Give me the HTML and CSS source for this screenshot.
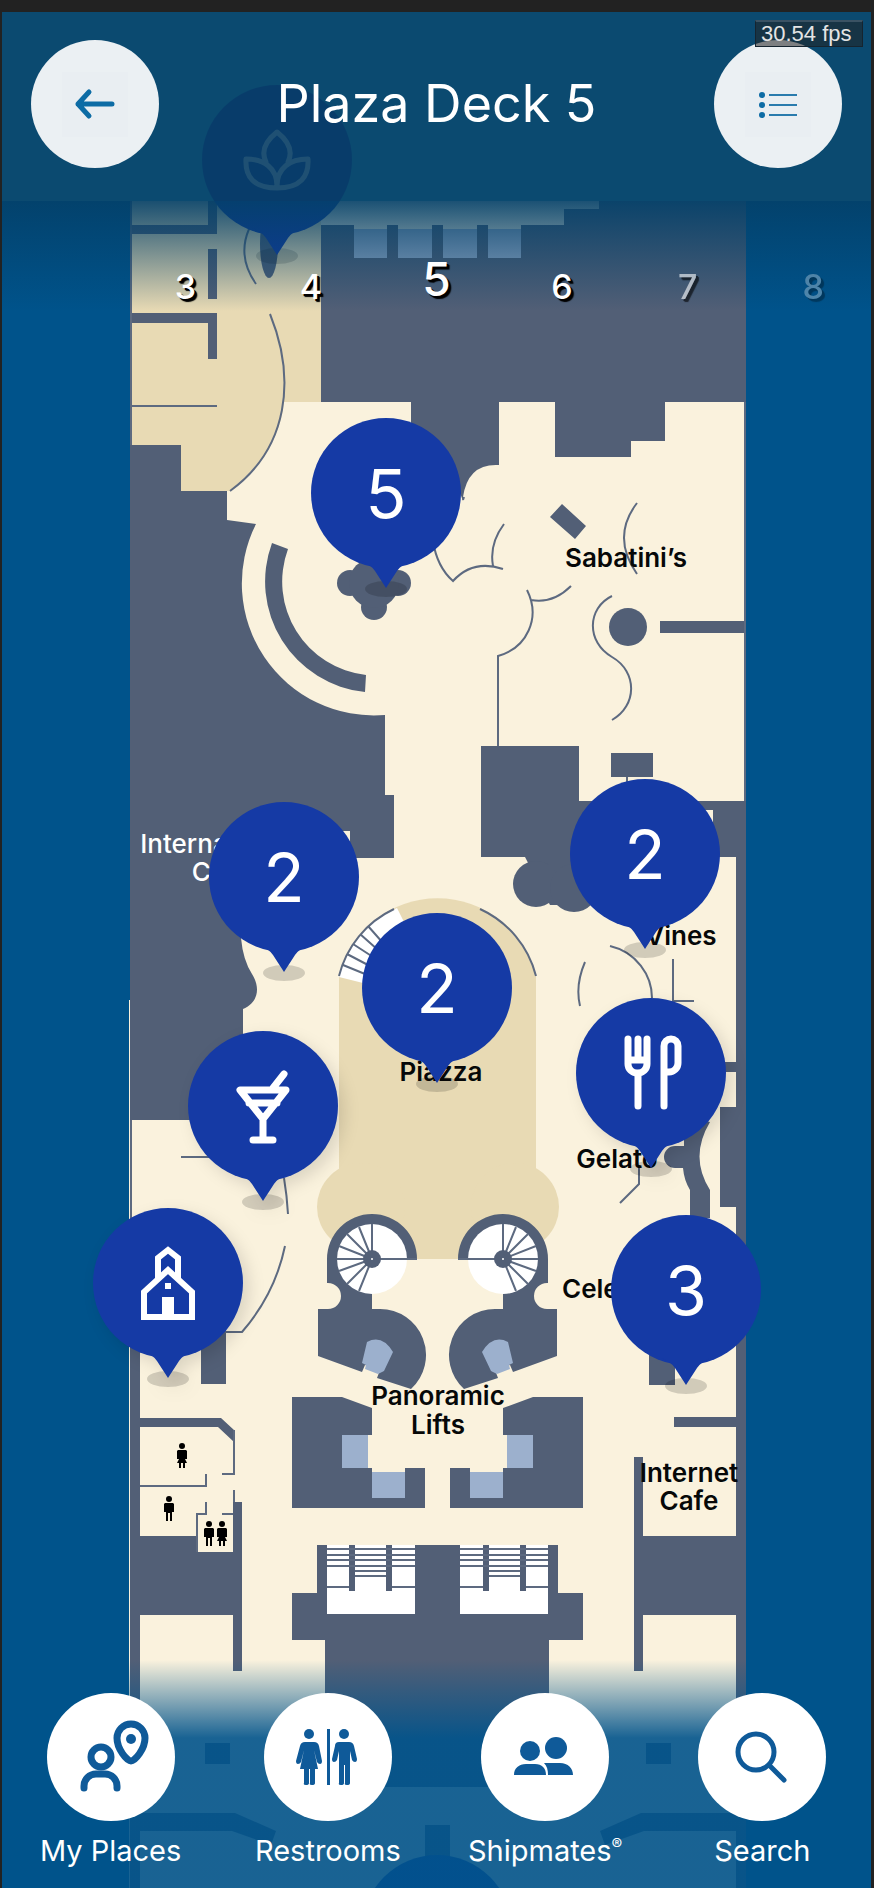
FILE: index.html
```html
<!DOCTYPE html>
<html lang="en">
<head>
<meta charset="utf-8">
<meta name="viewport" content="width=device-width, initial-scale=1">
<title>Plaza Deck 5</title>
<link rel="stylesheet" href="styles.css">
</head>
<body>
<div class="app">
  <main class="map">
    <svg class="plan" viewBox="2 12 869 1876" role="img" aria-label="Deck 5 floor plan">
      <defs>
        <g id="person">
          <circle cx="6" cy="3" r="3"/>
          <path d="M2 7h8l1 1v8H9v9H7v-8H5v8H3v-9H1V8z"/>
        </g>
        <g id="woman">
          <circle cx="6" cy="3" r="3"/>
          <path d="M2 7h8l1 1v8H9l2 4H9v5H7v-5H5v5H3v-5H1l2-4H1V8z"/>
        </g>
        <!-- port half of the atrium: spiral stair, curved lift and lift lobby -->
        <g id="atrium">
          <path class="slate" d="M327 1259a45 45 0 0 1 90 0h-45v50h8a46 46 0 0 1 31 80l-34-11 3-8-15-5-3 7-44-16v-47h10a13 13 0 0 0 0-26h-1z"/>
          <circle class="white" cx="372" cy="1259" r="35"/>
          <path class="line" d="M372 1259v-35M372 1259l-13-32M372 1259l-25-25M372 1259l-33-13M372 1259h-35M372 1259l-33 12M372 1259l-25 25M372 1259l-13 32M372 1259h45"/>
          <circle class="slate" cx="372" cy="1259" r="9"/>
          <circle class="white" cx="372" cy="1259" r="1"/>
          <path class="glass" d="M367 1342q15-8 26 10l-9 19-6 3-13-5 1-4-4-2z"/>
          <path class="slate" d="M292 1397h50l30 11v27h-4v33h4v4h33v-4h20v40H292z"/>
          <path class="glass" d="M342 1435h26v33h-26zM372 1472h33v26h-33z"/>
        </g>
        <g id="stairs">
          <path class="white" d="M327 1545h88v69h-88z"/>
          <path class="slate" d="M349 1545h6v46h-6zM386 1545h6v46h-6z"/>
          <path class="line" d="M327 1549h88M327 1555h88M327 1560h88M327 1566h88M355 1571h31M355 1576h31M327 1587h22M392 1587h23"/>
        </g>
      </defs>

      <rect class="sea" x="2" y="12" width="869" height="1876"/>
      <rect class="haze" x="2" y="12" width="869" height="189"/>
      <rect class="cream" x="130" y="201" width="616" height="1687"/>
      <rect class="cream" x="129" y="1000" width="2" height="888"/>

      <!-- forward, port -->
      <path class="tan" d="M131 201h190v201h-37q-4 48-54 89h-49v-46h-50z"/>
      <path class="slate" d="M130 225h78v-24h9v33h-87zM208 249h9v50h-9zM130 313h87v46h-9v-36h-78z"/>
      <path class="line" d="M131 406h86M270 314C296 378 289 448 230 491M249 229q-12 28 7 55M131 201v244"/>
      <ellipse class="slate" cx="269" cy="244" rx="9" ry="34"/>

      <!-- forward, starboard -->
      <path class="slate" d="M321 225h243v-16h35v-8h147v201h-81v39h-34v16h-76v-55h-56v63q-31-2-36 32v4l-6-16-46-5v-78h-90z"/>
      <path class="cream" d="M354 225h33v5h-33zM398 225h34v5h-34zM443 225h34v5h-34zM488 225h33v5h-33z"/>
      <path class="glass" d="M354 229h33v29h-33zM398 229h34v29h-34zM443 229h34v29h-34zM488 229h33v29h-33z"/>
      <path class="line" d="M464 497l-1 3M504 524q-15 20-11 42M503 569q-30-10-50 12-16-14-20-40M527 590c14 28 0 58-29 66v92M531 600q22 4 40-14M637 503q-26 34 0 71M612 596c-25 12-26 46 0 61s25 49 0 63"/>
      <path class="slate" d="M562 504l24 22-11 13-25-22zM660 621h86v12h-86zM611 753h42v24h-42z"/>
      <circle class="slate" cx="628" cy="627" r="19"/>

      <!-- curved bar -->
      <path class="slate" d="M130 445h51v46h46v29l29 4a132 132 0 0 0 129 191v80h9v63H241v80q2 22 11 36c10 16 4 30-9 35v111H130z"/>
      <path class="slate" d="M272 543a111 111 0 0 0 93 149l1-17a94 94 0 0 1-78-126z"/>
      <path class="cream" d="M340 831h10v14h-10z"/>
      <circle class="slate" cx="350" cy="583" r="13"/>
      <circle class="slate" cx="398" cy="583" r="13"/>
      <circle class="slate" cx="374" cy="607" r="13"/>
      <circle class="slate" cx="374" cy="583" r="25"/>

      <!-- midship, starboard -->
      <path class="slate" d="M481 746h98v55h167v1087h-10V857H620v48h-70l-25-48h-44z"/>
      <circle class="slate" cx="536" cy="884" r="23"/>
      <circle class="slate" cx="574" cy="888" r="24"/>
      <path class="cream" d="M700 810h13v12h-13zM600 857h136v60H600z"/>
      <path class="line" d="M627 777v6M610 946c26 6 42 29 42 52M585 962q-10 23-5 44M673 959v42h21M639 1165v19l-19 19M745 402v399"/>
      <path class="slate" d="M715 1062h21v10h-21zM720 1107h17v100h-17zM684 1115l26 7q-21 35 0 68v28h-20v-28q-6-10-7-22h-8a11 11 0 0 1 0-22h9zM649 1330h26v55h-26zM674 1417h62v10h-62zM634 1457h9v79h93v79h-93v56h-9z"/>

      <!-- piazza -->
      <path class="tan" d="M339 977a101 101 0 0 1 197 0v282H339z"/>
      <circle class="tan" cx="361" cy="1207" r="44"/>
      <circle class="tan" cx="515" cy="1207" r="44"/>
      <path class="cream" d="M320 1259h230v30H320z"/>
      <path class="white" d="M339 977a101 101 0 0 1 58-69l12 24-46 51z"/>
      <path class="line" d="M339 976a101 101 0 0 1 55-67M343 965l22 9M347 954l21 11M353 944l20 13M360 934l18 16M368 926l15 17M480 909a101 101 0 0 1 56 67"/>
      <use href="#atrium"/>
      <use href="#atrium" transform="translate(875 0) scale(-1 1)"/>

      <!-- aft stairs -->
      <path class="slate" d="M317 1545h241v48h25v47h-34v147H325v-147h-33v-47h25z"/>
      <use href="#stairs"/>
      <use href="#stairs" transform="translate(875 0) scale(-1 1)"/>

      <!-- aft, port -->
      <path class="slate" d="M130 1300h10v118h81l13 12v12l-16-15h-78v109h57v16h36v-50h9v169h-9v-56h-93v273h-10zM201 1320h25v64h-25z"/>
      <path class="line" d="M131 1120v180M181 1157h30M284 1178q3 18 4 36M225 1332h17q33-38 43-86M234 1430v44h-12M206 1474v12h-66M206 1502v12h-9v38M222 1514h11M234 1490v12"/>
      <use href="#woman" x="176" y="1443"/>
      <use href="#person" x="163" y="1496"/>
      <use href="#person" x="203" y="1521"/>
      <use href="#woman" x="216" y="1521"/>

      <!-- stern -->
      <path class="slate" d="M205 1743h25v21h-25zM646 1743h25v21h-25zM140 1813h95l41 18-5 14-39-14h-92zM736 1813h-95l-41 18 5 14 39-14h92zM425 1825h25v40h-25z"/>
      <circle class="marker" cx="437" cy="1930" r="75"/>

      <g class="place">
        <text x="626" y="567">Sabatini’s</text>
        <text x="681" y="945">Vines</text>
        <text x="441" y="1081">Piazza</text>
        <text x="617" y="1168">Gelato</text>
        <text x="642" y="1298">Celebrations</text>
        <text x="438" y="1405">Panoramic</text>
        <text x="438" y="1434">Lifts</text>
        <text x="689" y="1482">Internet</text>
        <text x="689" y="1510">Cafe</text>
      </g>
      <g class="place place-light">
        <text x="218" y="853">International</text>
        <text x="221" y="881">Cafe</text>
      </g>
    </svg>

    <button class="pin pin-spa" aria-label="Spa">
      <svg class="drop" viewBox="0 0 150 180"><use href="#drop"/><g class="glyph glyph-thin"><path d="M64 77C58 65 65 55 75 47 85 55 92 65 86 77M75 101C75 83 62 74 44 74 43 92 52 103 75 103 98 103 107 92 106 74 88 74 75 83 75 101"/></g></svg>
    </button>
    <button class="pin pin-fountain" aria-label="5 places"><svg class="drop" viewBox="0 0 150 180"><use href="#drop"/></svg><span class="count">5</span></button>
    <button class="pin pin-vines" aria-label="2 places"><svg class="drop" viewBox="0 0 150 180"><use href="#drop"/></svg><span class="count">2</span></button>
    <button class="pin pin-cafe" aria-label="2 places"><svg class="drop" viewBox="0 0 150 180"><use href="#drop"/></svg><span class="count">2</span></button>
    <button class="pin pin-piazza" aria-label="2 places"><svg class="drop" viewBox="0 0 150 180"><use href="#drop"/></svg><span class="count">2</span></button>
    <button class="pin pin-soft pin-gelato" aria-label="Dining">
      <svg class="drop" viewBox="0 0 150 180"><use href="#drop"/><g class="glyph"><path d="M52 41V66a9 9 0 0 0 9 9h1a9 9 0 0 0 9-9V41M62 41V61M52 62H71M62 75V108M88 108V48a7 7 0 0 1 14 0V65a9 9 0 0 1-9 9H88"/></g></svg>
    </button>
    <button class="pin pin-soft pin-bar" aria-label="Bar">
      <svg class="drop" viewBox="0 0 150 180"><use href="#drop"/><g class="glyph"><path d="M52 59H98L75 88ZM61 72H89M75 88V109M65 109H85M96 43L85 57"/></g></svg>
    </button>
    <button class="pin pin-soft pin-chapel" aria-label="Chapel">
      <svg class="drop" viewBox="0 0 150 180"><use href="#drop"/><g class="glyph glyph-square"><path d="M51 109V84L75 62 99 84V109ZM65 71V50L75 42 85 50V71"/><path class="solid" d="M69 89h12v19H69zM72 75h6v6h-6z"/></g></svg>
    </button>
    <button class="pin pin-celebrations" aria-label="3 places"><svg class="drop" viewBox="0 0 150 180"><use href="#drop"/></svg><span class="count">3</span></button>

    <svg class="sprite" aria-hidden="true">
      <defs>
        <g id="drop">
          <ellipse class="ground" cx="75" cy="171" rx="21" ry="8"/>
          <circle class="marker" cx="75" cy="75" r="75"/>
          <path class="marker" d="M50 143q9 3 14 10l11 17 11-17q5-7 14-10z"/>
        </g>
      </defs>
    </svg>
  </main>

  <div class="hud">
    <header class="topbar">
      <button class="round round-top" aria-label="Back">
        <svg viewBox="0 0 128 128"><rect class="pad" x="31" y="32" width="66" height="65"/><path class="arrow" d="M47 64H81M58 52L47 64l11 12"/></svg>
      </button>
      <h1 class="title">Plaza Deck 5</h1>
      <button class="round round-top" aria-label="List">
        <svg viewBox="0 0 128 128"><rect class="pad" x="31" y="32" width="66" height="65"/><path class="rows" d="M55 55H83M55 65H83M55 75H83"/><g class="dots"><circle cx="48" cy="55" r="3"/><circle cx="48" cy="65" r="3"/><circle cx="48" cy="75" r="3"/></g></svg>
      </button>
      <output class="fps">30.54 fps</output>
    </header>

    <nav class="decks" aria-label="Decks">
      <button class="deck deck-first">3</button>
      <button class="deck">4</button>
      <button class="deck deck-current" aria-current="true">5</button>
      <button class="deck">6</button>
      <button class="deck deck-dim">7</button>
      <button class="deck deck-faint">8</button>
    </nav>

    <nav class="tabs" aria-label="Tools">
      <button class="tab">
        <span class="round"><svg viewBox="0 0 128 128"><g class="outline"><circle cx="54" cy="64" r="10"/><path d="M37 95v-2a12 12 0 0 1 12-12h9a12 12 0 0 1 12 12v2M84 68C80 68 70 56 70 45a14 14 0 0 1 28 0C98 56 88 68 84 68Z"/></g><circle class="ink" cx="84" cy="46" r="5"/></svg></span>
        <span class="tab-name">My Places</span>
      </button>
      <button class="tab">
        <span class="round"><svg viewBox="0 0 128 128"><g class="ink"><circle cx="45" cy="41" r="5"/><circle cx="80" cy="41" r="5"/><path d="M63 36h3v56h-3zM41 49h9q4 0 5 4l3 15q0 3-2 3t-3-2l-3-12 4 19H51v14q0 2-3 2t-2-2V76h-1v14q0 2-3 2t-2-2V76H36l4-19-3 12q-1 2-3 2t-2-3l4-15q1-4 5-4zM75 49h10q4 0 5 4l3 13q0 3-2 3t-3-2l-2-9v32q0 2-3 2t-2-2V72h-1v18q0 2-3 2t-2-2V58l-2 9q-1 2-3 2t-2-3l3-13q0-4 4-4z"/></g></svg></span>
        <span class="tab-name">Restrooms</span>
      </button>
      <button class="tab">
        <span class="round"><svg viewBox="0 0 128 128"><g class="ink"><circle cx="49" cy="58" r="10"/><circle cx="75" cy="55" r="11"/><path d="M33 82c0-7 5-11 12-11h9c7 0 11 4 11 11zM63 70h16c8 0 13 5 13 12H67c0-5-1-9-4-12z"/></g></svg></span>
        <span class="tab-name">Shipmates<sup class="mark">®</sup></span>
      </button>
      <button class="tab">
        <span class="round"><svg viewBox="0 0 128 128"><g class="outline outline-thin"><circle cx="58" cy="59" r="18"/><path d="M72 73L86 87"/></g></svg></span>
        <span class="tab-name">Search</span>
      </button>
    </nav>
  </div>
</div>
</body>
</html>
```

FILE: styles.css
```css
* { box-sizing: border-box; }

body {
  margin: 0;
  padding: 12px 3px 0 2px;
  background: #222;
  font-family: Inter, "Open Sans", sans-serif;
}

button {
  margin: 0;
  padding: 0;
  border: 0;
  background: none;
  color: inherit;
  font: inherit;
  cursor: pointer;
}

.app {
  display: grid;
  overflow: hidden;
  background: #00538b;
}

.map, .hud { grid-area: 1 / 1; }

/* floor plan */
.map { position: relative; }
.plan { display: block; width: 100%; height: auto; }
.sprite { position: absolute; width: 0; height: 0; }
.sea { fill: #00538b; }
.haze { fill: #32bedc; }
.cream { fill: #faf2dd; }
.tan { fill: #e8dab4; }
.slate { fill: #525f76; }
.glass { fill: #9cb0cd; }
.white { fill: #fff; }
.marker { fill: #153aa5; }
.line { fill: none; stroke: #5d6a80; stroke-width: 2; }
.place {
  fill: #060808;
  font-size: 26px;
  font-weight: 600;
  text-anchor: middle;
}
.place-light { fill: #fff; font-weight: 500; }

/* pins: --x and --y are the centre of the disc on the 869 by 1876 plan */
.pin {
  position: absolute;
  left: calc(var(--x) / 869 * 100%);
  top: calc(var(--y) / 1876 * 100%);
  width: 150px;
  height: 180px;
  margin: -75px 0 0 -75px;
  color: #fff;
}
.drop { display: block; width: 100%; overflow: visible; }
.pin-soft .drop { filter: drop-shadow(6px 6px 8px rgb(0 0 0 / 12%)); }
.ground { fill: rgb(0 0 0 / 16%); }
.count {
  position: absolute;
  inset: 0 0 auto;
  font-size: 68px;
  line-height: 150px;
  text-align: center;
}
.glyph {
  fill: none;
  stroke: #fff;
  stroke-width: 7;
  stroke-linecap: round;
  stroke-linejoin: round;
}
.glyph-thin { stroke-width: 5; }
.glyph-square { stroke-width: 6; stroke-linecap: butt; stroke-linejoin: miter; }
.solid { fill: #fff; stroke: none; }

.pin-spa { --x: 275; --y: 148; }
.pin-fountain { --x: 384; --y: 481; }
.pin-vines { --x: 643; --y: 842; }
.pin-cafe { --x: 282; --y: 865; }
.pin-piazza { --x: 435; --y: 976; }
.pin-gelato { --x: 649; --y: 1061; }
.pin-bar { --x: 261; --y: 1094; }
.pin-chapel { --x: 166; --y: 1271; }
.pin-celebrations { --x: 684; --y: 1278; }

/* controls over the plan */
.hud {
  position: relative;
  display: flex;
  flex-direction: column;
  color: #fff;
  pointer-events: none;
}
.hud button { pointer-events: auto; }

.topbar {
  position: relative;
  display: flex;
  align-items: center;
  justify-content: space-between;
  padding: 28px 29px 33px;
  background: rgb(7 61 100 / 90%);
}
.title {
  margin: 0;
  font-size: 52px;
  font-weight: 400;
  line-height: 60px;
}
.round {
  display: block;
  width: 128px;
  height: 128px;
  border-radius: 50%;
  background: #fff;
}
.round-top { background: #ebf0f3; }
.round svg { display: block; width: 100%; }
.pad { fill: #e9eef2; }
.arrow {
  fill: none;
  stroke: #0d6ca5;
  stroke-width: 5;
  stroke-linecap: round;
  stroke-linejoin: round;
}
.rows { fill: none; stroke: #2a7bad; stroke-width: 2; }
.dots { fill: #0d6ca5; }
.fps {
  position: absolute;
  top: 8px;
  right: 8px;
  width: 108px;
  padding-left: 5px;
  border: 1px solid #16242f;
  border-top: 2px solid #3a5263;
  background: rgb(34 34 34 / 55%);
  color: #e4e4e4;
  font: 22px/24px "Liberation Sans", Arial, sans-serif;
}

.decks {
  display: grid;
  grid-template-columns: repeat(7, 1fr);
  align-items: end;
  height: 110px;
  margin: 0 -5px;
  padding-bottom: 4px;
  background: linear-gradient(rgb(3 64 105 / 90%), rgb(3 64 105 / 0%));
}
.deck {
  font-size: 34px;
  font-weight: 500;
  line-height: 40px;
  text-shadow: 2px 2px 0 #000, 3px 3px 1px #000;
}
.deck-first { grid-column: 2; }
.deck-current { font-size: 46px; line-height: 56px; }
.deck-dim { opacity: 0.6; }
.deck-faint { opacity: 0.3; }

.tabs {
  display: grid;
  grid-template-columns: repeat(4, 1fr);
  margin-top: auto;
  padding: 33px 0 20px;
  background: linear-gradient(rgb(0 83 139 / 0%), rgb(0 83 139 / 90%) 78px);
}
.tab {
  display: flex;
  flex-direction: column;
  align-items: center;
  gap: 13px;
}
.tab-name {
  font-size: 29px;
  line-height: 34px;
  white-space: nowrap;
}
.mark { font-size: 16px; line-height: 0; }
.ink { fill: #0f5a99; }
.outline {
  fill: none;
  stroke: #0f5a99;
  stroke-width: 7;
  stroke-linecap: round;
  stroke-linejoin: round;
}
.outline-thin { stroke-width: 5; }
```
